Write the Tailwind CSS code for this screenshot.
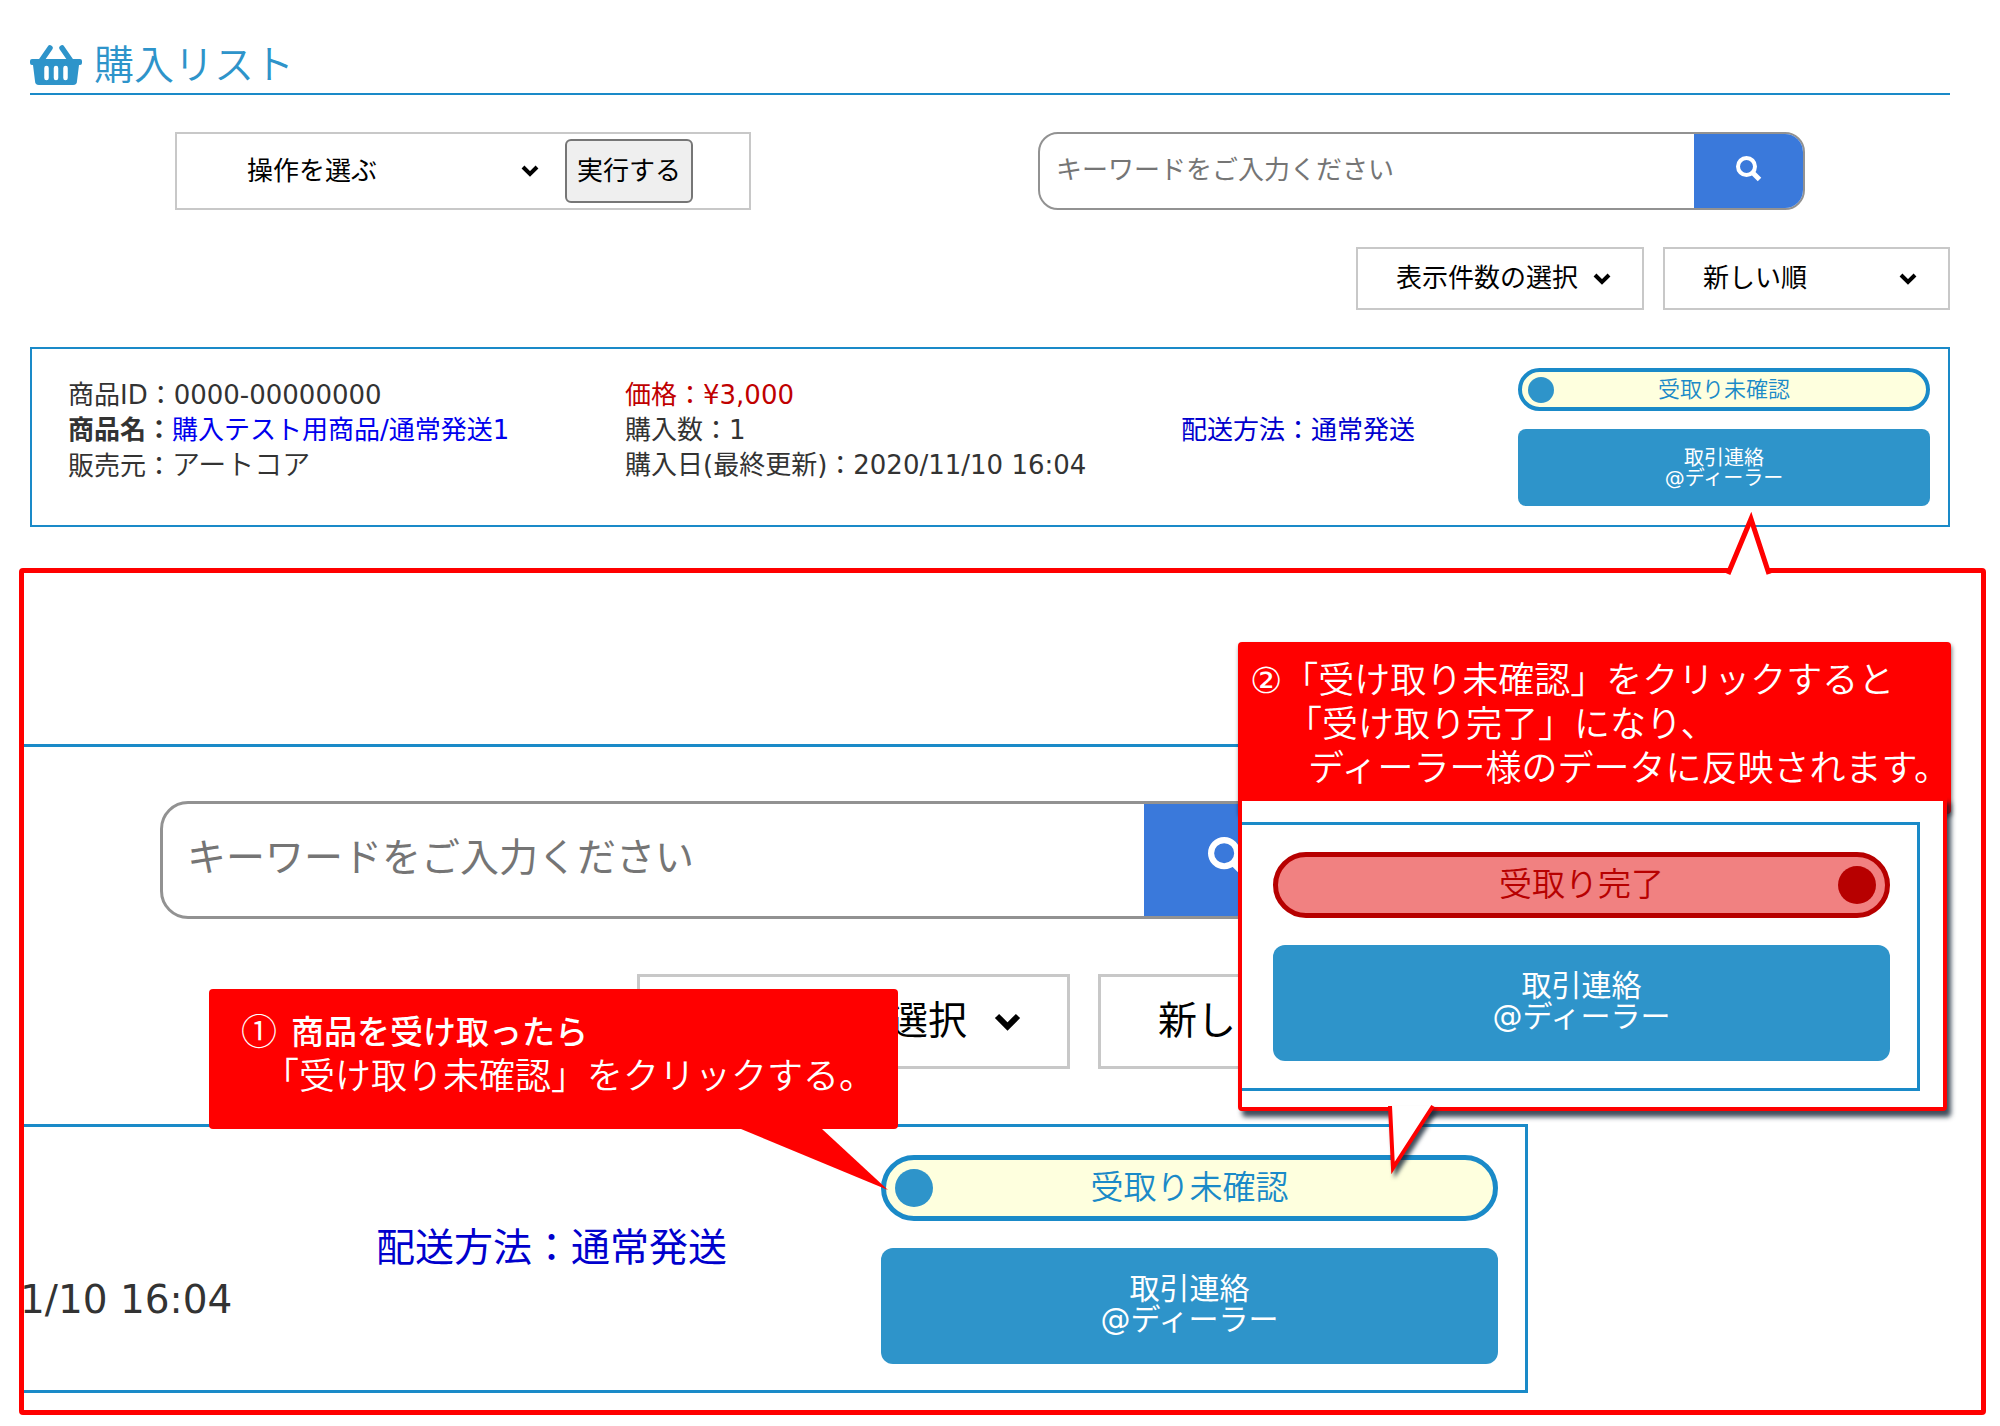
<!DOCTYPE html>
<html lang="ja">
<head>
<meta charset="utf-8">
<meta name="viewport" content="width=device-width, initial-scale=1">
<title>購入リスト</title>
<script src="https://cdn.jsdelivr.net/npm/@tailwindcss/browser@4"></script>
</head>
<body class="bg-white pb-3 font-['DejaVu_Sans','Noto_Sans_CJK_JP',sans-serif] text-[26px] text-[#333]">

<!-- Purchase list -->
<main class="pl-[30px] pr-[50px] pt-[37px]">
  <header class="flex h-[58px] items-center gap-3 border-b-2 border-[#1a8ac8] text-[#2e94ca]">
    <svg class="h-10 w-[52px]" viewBox="0 0 52 40" fill="none" aria-hidden="true">
      <path d="M11 16 20 3M41 16 32 3" stroke="currentColor" stroke-width="5.500" stroke-linecap="round"/>
      <path fill="currentColor" d="M2 14h48a2 2 0 0 1 2 2v2a2 2 0 0 1-2 2h-1l-2 16a4 4 0 0 1-4 4H9a4 4 0 0 1-4-4L3 20H2a2 2 0 0 1-2-2v-2a2 2 0 0 1 2-2z"/>
      <path d="M16.500 23v10M26 23v10M35.500 23v10" stroke="#fff" stroke-width="4.500" stroke-linecap="round"/>
    </svg>
    <h1 class="text-[40px] leading-10 font-[350]">購入リスト</h1>
  </header>

  <div class="mt-[37px] flex justify-between px-[145px]">
    <form class="flex h-[78px] w-[576px] items-center border-2 border-[#c8c8c8] pl-[70px]">
      <div class="relative w-[302px]">
        <select aria-label="操作を選ぶ" class="w-full appearance-none bg-transparent leading-10 text-black">
          <option>操作を選ぶ</option>
        </select>
        <svg class="pointer-events-none absolute top-[14px] right-[10px] h-3 w-[18px]" viewBox="0 0 18 12" fill="none" stroke="#000" stroke-width="4" aria-hidden="true"><path d="M2 2l7 7 7-7"/></svg>
      </div>
      <button type="button" class="ml-4 h-16 w-32 rounded-md border-2 border-[#767676] bg-[#efefef] text-black">実行する</button>
    </form>
    <form class="flex h-[78px] w-[767px] overflow-hidden rounded-[20px] border-2 border-[#929292]">
      <input type="search" aria-label="キーワード" placeholder="キーワードをご入力ください" class="min-w-0 flex-1 px-4 pb-[2px] placeholder:text-[#757575]">
      <button type="button" aria-label="検索" class="flex w-[109px] items-center justify-center bg-[#3a79db] pb-1 text-white">
        <svg class="size-[26px]" viewBox="0 0 26 26" fill="none" stroke="currentColor" aria-hidden="true"><circle cx="10.500" cy="10.500" r="8.500" stroke-width="4"/><path d="M16.500 16.500l7 7" stroke-width="5"/></svg>
      </button>
    </form>
  </div>

  <div class="mt-[37px] flex justify-end gap-[19px]">
    <div class="relative h-[63px] w-[288px] border-2 border-[#c8c8c8]">
      <select aria-label="表示件数の選択" class="h-full w-full appearance-none bg-transparent pl-[38px] text-black"><option>表示件数の選択</option></select>
      <svg class="pointer-events-none absolute top-6 right-[31px] h-3 w-[18px]" viewBox="0 0 18 12" fill="none" stroke="#000" stroke-width="4" aria-hidden="true"><path d="M2 2l7 7 7-7"/></svg>
    </div>
    <div class="relative h-[63px] w-[287px] border-2 border-[#c8c8c8]">
      <select aria-label="並び順" class="h-full w-full appearance-none bg-transparent pl-[38px] text-black"><option>新しい順</option></select>
      <svg class="pointer-events-none absolute top-6 right-[31px] h-3 w-[18px]" viewBox="0 0 18 12" fill="none" stroke="#000" stroke-width="4" aria-hidden="true"><path d="M2 2l7 7 7-7"/></svg>
    </div>
  </div>

  <article class="mt-[37px] flex justify-between border-2 border-[#1a8ac8] py-[19px] pl-9 pr-[18px]">
    <div class="grid flex-1 grid-cols-[557px_556px_1fr] pt-[10px] leading-[35px] whitespace-nowrap">
      <div>
        <p>商品ID：0000-00000000</p>
        <p><b>商品名：</b><a href="#" class="text-[#0000ee]">購入テスト用商品/通常発送1</a></p>
        <p>販売元：<span class="text-[28px] font-[350]">アートコア</span></p>
      </div>
      <div>
        <p class="text-[#c00000]">価格：¥3,000</p>
        <p>購入数：1</p>
        <p>購入日(最終更新)：2020/11/10 16:04</p>
      </div>
      <p class="pt-[35px] text-[#0000cd]">配送方法：通常発送</p>
    </div>
    <div class="w-[412px]">
      <button type="button" aria-pressed="false" class="grid h-[43px] w-full grid-cols-[26px_1fr_26px] items-center rounded-full border-4 border-[#1a8ac8] bg-[#feffde] px-[6px] text-[22px] font-[350] text-[#1a8ac8]">
        <span class="size-[26px] rounded-full bg-[#2e94ca]"></span><span>受取り未確認</span>
      </button>
      <button type="button" class="mt-[18px] block h-[77px] w-full rounded-lg bg-[#2e94ca] text-xl leading-5 text-white">取引連絡<br>@ディーラー</button>
    </div>
  </article>
</main>

<!-- Enlarged view with the two steps -->
<section class="relative mt-[41px] ml-[19px] mr-[14px] rounded border-5 border-[#ff0000]">
  <svg class="absolute -top-[68px] right-[201px] h-[75px] w-[60px]" viewBox="0 0 60 75" aria-hidden="true">
    <path d="M8 69 31 14 49 69" fill="#fff" stroke="#f00" stroke-width="5" stroke-miterlimit="10"/>
  </svg>

  <div class="overflow-hidden pb-[17px] text-[39px]">
    <div class="h-[174px] w-[1400px] border-b-3 border-[#1a8ac8]"></div>

    <form class="mt-[54px] ml-[136px] flex h-[118px] w-[1151px] overflow-hidden rounded-[28px] border-3 border-[#929292]">
      <input type="search" aria-label="キーワード（拡大）" placeholder="キーワードをご入力ください" class="min-w-0 flex-1 px-6 pb-1 placeholder:text-[#757575]">
      <button type="button" aria-label="検索（拡大）" class="flex w-[164px] items-center bg-[#3a79db] pb-[6px] pl-16 text-white">
        <svg class="size-10" viewBox="0 0 26 26" fill="none" stroke="currentColor" aria-hidden="true"><circle cx="10.500" cy="10.500" r="8.500" stroke-width="4"/><path d="M16.500 16.500l7 7" stroke-width="5"/></svg>
      </button>
    </form>

    <div class="mt-[55px] ml-[613px] flex gap-7">
      <div class="relative h-[95px] w-[433px] border-3 border-[#c8c8c8]">
        <select aria-label="表示件数の選択（拡大）" class="h-full w-full appearance-none bg-transparent pl-[54px] text-black"><option>表示件数の選択</option></select>
        <svg class="pointer-events-none absolute top-9 right-[46px] h-[18px] w-[27px]" viewBox="0 0 18 12" fill="none" stroke="#000" stroke-width="4" aria-hidden="true"><path d="M2 2l7 7 7-7"/></svg>
      </div>
      <div class="h-[95px] w-[432px] border-3 border-[#c8c8c8]">
        <select aria-label="並び順（拡大）" class="h-full w-full appearance-none bg-transparent pl-[57px] text-black"><option>新しい順</option></select>
      </div>
    </div>

    <div class="mt-[55px] flex h-[269px] w-[1504px] border-y-3 border-r-3 border-[#1a8ac8]">
      <div class="flex w-[352px] pt-[147px] leading-[52px] whitespace-nowrap">
        <p class="-ml-1">1/10 16:04</p>
      </div>
      <p class="flex-1 pt-[95px] leading-[52px] text-[#0000cd]">配送方法：通常発送</p>
      <div class="mr-[27px] w-[617px] pt-7">
        <button type="button" aria-pressed="false" class="grid h-[66px] w-full grid-cols-[38px_1fr_38px] items-center rounded-full border-5 border-[#1a8ac8] bg-[#feffde] px-[9px] text-[33px] font-[350] text-[#1a8ac8]">
          <span class="size-[38px] rounded-full bg-[#2e94ca]"></span><span>受取り未確認</span>
        </button>
        <button type="button" class="mt-[27px] block h-[116px] w-full rounded-xl bg-[#2e94ca] pb-1 text-3xl leading-[31px] text-white">取引連絡<br>@ディーラー</button>
      </div>
    </div>
  </div>

  <!-- Step 1 -->
  <aside class="absolute top-[416px] left-[185px] h-[140px] w-[689px] rounded bg-[#ff0000] pt-[22px] pl-8 text-[36px] leading-[44px] font-[350] whitespace-nowrap text-white">
    <p class="flex gap-[14px]"><span>①</span><span class="text-[33px] font-medium">商品を受け取ったら</span></p>
    <p class="pl-[22px]">「受け取り未確認」をクリックする。</p>
    <svg class="absolute top-full left-[532px] h-[62px] w-[150px]" viewBox="0 0 150 62" aria-hidden="true"><path d="M0 0h81L147 61z" fill="#f00"/></svg>
  </aside>

  <!-- Step 2 -->
  <aside class="absolute top-[69px] left-[1214px] w-[713px] text-white">
    <div class="h-[172px] rounded bg-[#ff0000] pt-[17px] pl-3 text-[36px] leading-[44px] font-[350] whitespace-nowrap shadow-[1px_3px_4px_#0008]">
      <p><span class="font-medium">②</span>「受け取り未確認」をクリックすると</p>
      <p class="pl-9">「受け取り完了」になり、</p>
      <p class="pl-[58px]">ディーラー様のデータに反映されます。</p>
    </div>
    <div class="relative -mt-[17px] mr-1 rounded-b border-4 border-[#ff0000] bg-white pt-[21px] pr-[23px] pb-4 shadow-[4px_6px_5px_#123c]">
      <div class="h-[269px] border-y-3 border-r-3 border-[#1a8ac8] pt-[27px] pr-[27px] pl-[31px]">
        <button type="button" aria-pressed="true" class="grid h-[66px] w-full grid-cols-[38px_1fr_38px] items-center rounded-full border-5 border-[#b70000] bg-[#f18181] px-[9px] text-[33px] font-[350] text-[#b70000]">
          <span class="col-start-2">受取り完了</span><span class="size-[38px] rounded-full bg-[#b70000]"></span>
        </button>
        <button type="button" class="mt-[27px] block h-[116px] w-full rounded-xl bg-[#2e94ca] pb-1 text-3xl leading-[31px] text-white">取引連絡<br>@ディーラー</button>
      </div>
      <svg class="absolute top-full left-[140px] -mt-px h-[90px] w-[70px] overflow-visible drop-shadow-[3px_4px_2px_#123c]" viewBox="0 0 70 90" aria-hidden="true">
        <path d="M8 0 11 62 51 0" fill="#fff" stroke="#f00" stroke-width="4" stroke-miterlimit="10"/>
      </svg>
    </div>
  </aside>
</section>
</body>
</html>
